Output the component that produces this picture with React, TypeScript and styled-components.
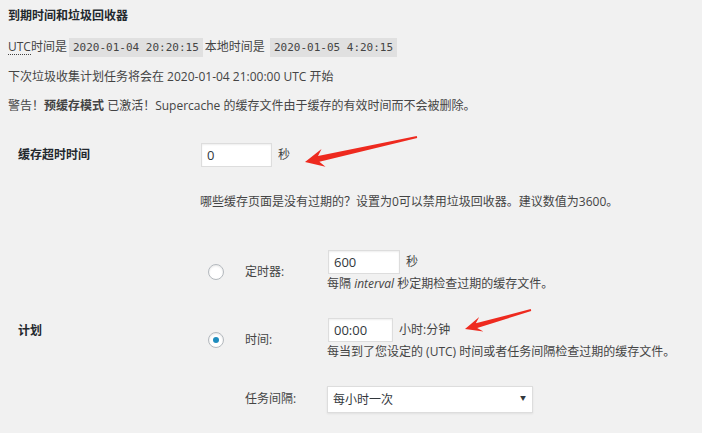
import React from "react";
import styled, { createGlobalStyle } from "styled-components";

const GlobalStyle = createGlobalStyle`
  html, body {
    margin: 0;
    padding: 0;
    background: #f1f1f1;
  }
  body {
    color: #444;
    font-family: "Open Sans", "Noto Sans CJK SC", sans-serif;
    font-size: 12px;
    line-height: 1.4;
  }
`;

const Page = styled.div`
  position: relative;
  width: 702px;
  height: 433px;
  padding: 8px 0 0 8px;
  box-sizing: border-box;
  overflow: hidden;
`;

const Title = styled.h3`
  margin: 0 0 13px;
  font-size: 12px;
  line-height: 16px;
  font-weight: 700;
  color: #23282d;
`;

const Para = styled.p`
  margin: 0 0 9px;
  line-height: 20px;
  white-space: nowrap;
`;

const Abbr = styled.abbr`
  text-decoration: none;
  border-bottom: 1px dotted #444;
  line-height: 14px;
  display: inline-block;
`;

const Code = styled.code`
  font-family: "DejaVu Sans Mono", "Liberation Mono", monospace;
  font-size: 11px;
  background: rgba(0, 0, 0, 0.07);
  padding: 3px 4px 3px;
  margin: 0 2px;
`;

const FormTable = styled.div`
  display: grid;
  grid-template-columns: 192px auto;
  margin-top: 27px;
`;

const Th = styled.div<{ $top?: number }>`
  padding-left: 10px;
  font-weight: 700;
  color: #23282d;
  align-self: center;
  margin-top: ${({ $top }) => $top ?? 0}px;
`;

const Td = styled.div<{ $top?: number }>`
  display: flex;
  flex-direction: column;
  align-items: flex-start;
  margin-top: ${({ $top }) => $top ?? 0}px;
`;

const FieldLine = styled.div`
  display: flex;
  align-items: center;
  gap: 6px;
  white-space: nowrap;
`;

const Input = styled.input<{ $w: number }>`
  box-sizing: border-box;
  width: ${({ $w }) => $w}px;
  height: 24px;
  margin: 0 0 0 1px;
  padding: 0 5px;
  border: 1px solid #ddd;
  box-shadow: inset 0 1px 2px rgba(0, 0, 0, 0.07);
  background: #fff;
  color: #32373c;
  font-family: "Open Sans", "Noto Sans CJK SC", sans-serif;
  font-size: 13px;
  outline: none;
`;

const Unit = styled.span`
  color: #444;
`;

const Desc = styled.p`
  margin: 0;
  line-height: 20px;
  white-space: nowrap;

  em {
    font-style: italic;
  }
`;

const ScheduleGrid = styled.div`
  display: grid;
  grid-template-columns: 45px 82px auto;
  row-gap: 24px;
  align-items: center;
`;

const Radio = styled.span<{ $checked?: boolean }>`
  box-sizing: border-box;
  display: inline-flex;
  align-items: center;
  justify-content: center;
  width: 16px;
  height: 16px;
  margin-left: 8px;
  border: 1px solid #b4b9be;
  border-radius: 50%;
  background: #fff;
  box-shadow: inset 0 1px 2px rgba(0, 0, 0, 0.1);

  &::before {
    content: "";
    display: ${({ $checked }) => ($checked ? "block" : "none")};
    width: 6px;
    height: 6px;
    border-radius: 50%;
    background: #1e8cbe;
  }
`;

const OptionLabel = styled.span`
  color: #444;
  white-space: nowrap;
`;

const SelectWrap = styled.div`
  position: relative;
  width: 206px;

  &::after {
    content: "▼";
    position: absolute;
    right: 7px;
    top: 8px;
    font-size: 6px;
    color: #32373c;
    pointer-events: none;
  }
`;

const Select = styled.select`
  appearance: none;
  box-sizing: border-box;
  width: 100%;
  height: 27px;
  margin: 0;
  padding: 0 5px;
  border: 1px solid #ddd;
  box-shadow: 0 1px 2px rgba(0, 0, 0, 0.07);
  background: #fff;
  color: #32373c;
  font-family: "Open Sans", "Noto Sans CJK SC", sans-serif;
  font-size: 12px;
  border-radius: 0;
  outline: none;
`;

const Overlay = styled.svg`
  position: absolute;
  left: 0;
  top: 0;
  pointer-events: none;
`;

const ArrowShape = styled.polygon`
  fill: #ee2a1f;
`;

const Arrows = () => (
  <Overlay width={702} height={433} viewBox="0 0 702 433">
    <ArrowShape points="305,162 321.5,149.1 318,156 416.8,136 417.2,138 319.4,161.8 325.5,166.7" />
    <ArrowShape points="465,329 479.2,317.1 475.8,323.3 530.8,309.1 531.2,310.9 477.2,328.1 483.4,331.5" />
  </Overlay>
);

export default function App() {
  return (
    <>
      <GlobalStyle />
      <Page>
        <Title>到期时间和垃圾回收器</Title>
        <Para>
          <Abbr title="协调世界时">UTC</Abbr>时间是
          <Code>2020-01-04 20:20:15</Code>
          本地时间是 <Code>2020-01-05 4:20:15</Code>
        </Para>
        <Para>下次垃圾收集计划任务将会在 2020-01-04 21:00:00 UTC 开始</Para>
        <Para>
          警告！<strong>预缓存模式</strong> 已激活！Supercache
          的缓存文件由于缓存的有效时间而不会被删除。
        </Para>

        <FormTable>
          <Th>缓存超时时间</Th>
          <Td>
            <FieldLine>
              <Input $w={71} defaultValue="0" />
              <Unit>秒</Unit>
            </FieldLine>
          </Td>

          <div />
          <Td $top={25}>
            <Desc>
              哪些缓存页面是没有过期的？设置为0可以禁用垃圾回收器。建议数值为3600。
            </Desc>
          </Td>

          <Th $top={38}>计划</Th>
          <Td $top={38}>
            <ScheduleGrid>
              <Radio />
              <OptionLabel>定时器:</OptionLabel>
              <div>
                <FieldLine>
                  <Input $w={72} defaultValue="600" />
                  <Unit>秒</Unit>
                </FieldLine>
                <Desc>
                  每隔 <em>interval</em> 秒定期检查过期的缓存文件。
                </Desc>
              </div>

              <Radio $checked />
              <OptionLabel>时间:</OptionLabel>
              <div>
                <FieldLine>
                  <Input $w={65} defaultValue="00:00" />
                  <Unit>小时:分钟</Unit>
                </FieldLine>
                <Desc>每当到了您设定的 (UTC) 时间或者任务间隔检查过期的缓存文件。</Desc>
              </div>

              <div />
              <OptionLabel>任务间隔:</OptionLabel>
              <SelectWrap>
                <Select defaultValue="hourly">
                  <option value="hourly">每小时一次</option>
                  <option value="twicedaily">每天两次</option>
                  <option value="daily">每天一次</option>
                </Select>
              </SelectWrap>
            </ScheduleGrid>
          </Td>
        </FormTable>
        <Arrows />
      </Page>
    </>
  );
}
